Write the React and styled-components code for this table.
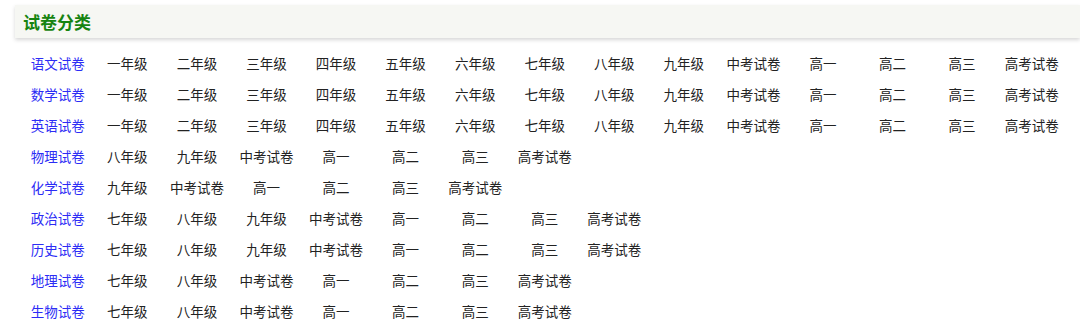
import React from "react";
import styled, { createGlobalStyle } from "styled-components";

const GlobalStyle = createGlobalStyle`
  html, body {
    margin: 0;
    padding: 0;
    background: #ffffff;
    font-family: "Noto Sans CJK SC", "Noto Sans", sans-serif;
  }
`;

const subjects = [
  { name: "语文试卷", items: ["一年级", "二年级", "三年级", "四年级", "五年级", "六年级", "七年级", "八年级", "九年级", "中考试卷", "高一", "高二", "高三", "高考试卷"] },
  { name: "数学试卷", items: ["一年级", "二年级", "三年级", "四年级", "五年级", "六年级", "七年级", "八年级", "九年级", "中考试卷", "高一", "高二", "高三", "高考试卷"] },
  { name: "英语试卷", items: ["一年级", "二年级", "三年级", "四年级", "五年级", "六年级", "七年级", "八年级", "九年级", "中考试卷", "高一", "高二", "高三", "高考试卷"] },
  { name: "物理试卷", items: ["八年级", "九年级", "中考试卷", "高一", "高二", "高三", "高考试卷"] },
  { name: "化学试卷", items: ["九年级", "中考试卷", "高一", "高二", "高三", "高考试卷"] },
  { name: "政治试卷", items: ["七年级", "八年级", "九年级", "中考试卷", "高一", "高二", "高三", "高考试卷"] },
  { name: "历史试卷", items: ["七年级", "八年级", "九年级", "中考试卷", "高一", "高二", "高三", "高考试卷"] },
  { name: "地理试卷", items: ["七年级", "八年级", "中考试卷", "高一", "高二", "高三", "高考试卷"] },
  { name: "生物试卷", items: ["七年级", "八年级", "中考试卷", "高一", "高二", "高三", "高考试卷"] },
];

const Page = styled.div`
  width: 1080px;
  padding-top: 5px;
`;

const Header = styled.div`
  margin-left: 15px;
  height: 33px;
  background: #f6f7f3;
  box-shadow: 0 2px 4px rgba(0, 0, 0, 0.16);
  display: flex;
  align-items: center;
  padding-left: 8px;
`;

const Title = styled.h2`
  margin: 0;
  font-size: 17px;
  font-weight: bold;
  color: #168410;
`;

const List = styled.ul`
  list-style: none;
  margin: 0;
  padding: 9px 0 0 23px;
`;

const Row = styled.li`
  display: flex;
  height: 31px;
  align-items: center;
`;

const Cell = styled.a`
  flex: 0 0 69.57px;
  text-align: center;
  font-size: 13.5px;
  color: ${(p) => (p.$subject ? "#2c2cf5" : "#222222")};
  text-decoration: none;
  white-space: nowrap;
`;

export default function App() {
  return (
    <Page>
      <GlobalStyle />
      <Header>
        <Title>试卷分类</Title>
      </Header>
      <List>
        {subjects.map((s) => (
          <Row key={s.name}>
            <Cell $subject href="#">{s.name}</Cell>
            {s.items.map((it, i) => (
              <Cell key={i} href="#">{it}</Cell>
            ))}
          </Row>
        ))}
      </List>
    </Page>
  );
}
